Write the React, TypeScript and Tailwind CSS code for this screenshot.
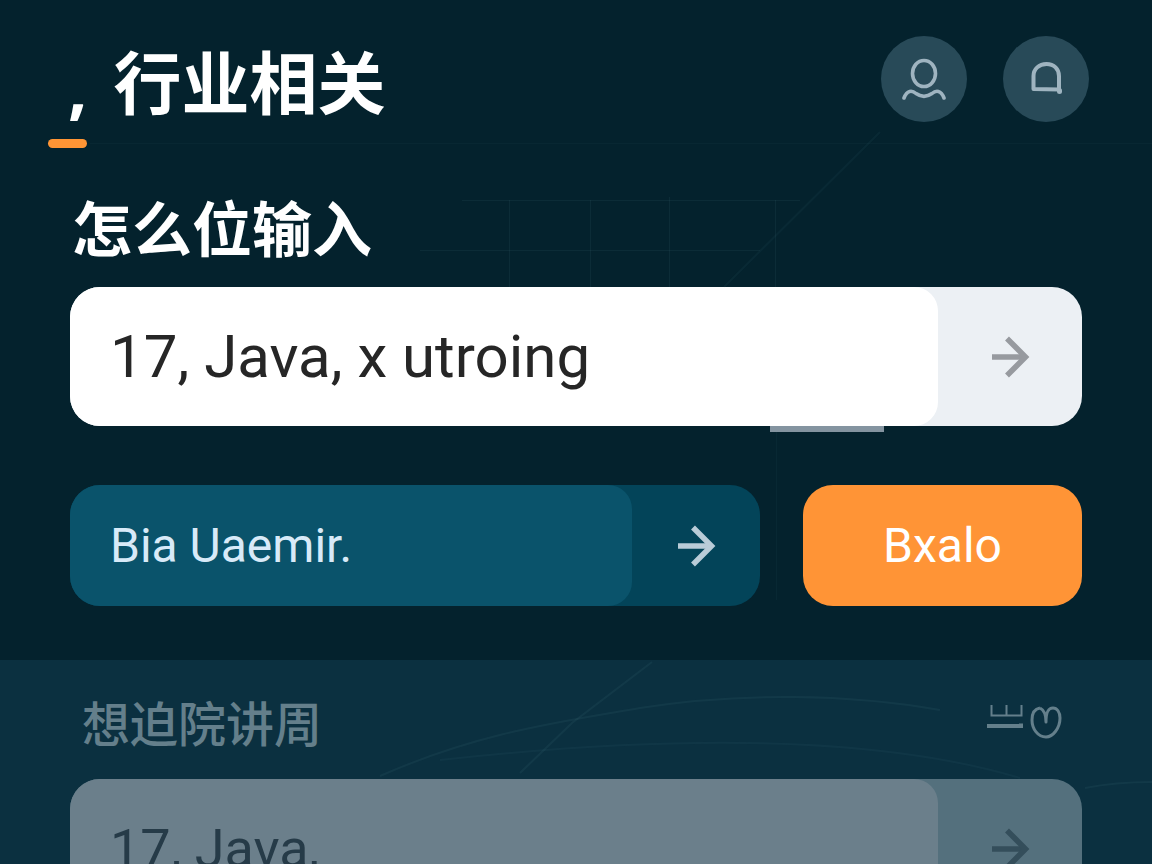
import type { ReactNode } from "react";

function ArrowIcon({ className }: { className?: string }) {
  return (
    <svg viewBox="0 0 40 44" className={className} fill="none" stroke="currentColor" strokeWidth="5.5">
      <path d="M2 22H35" />
      <path d="M17 3.5L35.500 22L17 40.500" />
    </svg>
  );
}

function RoundButton({ label, children }: { label: string; children: ReactNode }) {
  return (
    <button
      type="button"
      aria-label={label}
      className="flex size-[86px] items-center justify-center rounded-full bg-[#284a58] text-[#9fb4c0]"
    >
      {children}
    </button>
  );
}

function BackgroundLines() {
  return (
    <svg
      aria-hidden="true"
      viewBox="0 0 1152 864"
      preserveAspectRatio="xMidYMin slice"
      className="pointer-events-none absolute inset-0 h-full w-full"
      fill="none"
      stroke="#5b8796"
      strokeOpacity="0.1"
    >
      <path d="M90 143.500H1152" strokeOpacity="0.05" />
      <path d="M462 200.500H800M420 250.500H760" />
      <path d="M509.500 200V287M590.500 200V287M669.500 197V287M775.500 200V287" />
      <path d="M724 287L880 132" strokeWidth="2" strokeOpacity="0.07" />
      <path d="M776.500 432V600" strokeOpacity="0.06" />
      <path d="M520 773L572 723L652 662" strokeWidth="2" />
      <path d="M380 776C480 732 560 722 640 708C740 692 850 694 940 710" strokeWidth="2" />
      <path d="M440 760C640 738 860 730 1020 778" strokeWidth="2" strokeOpacity="0.07" />
      <path d="M1085 788Q1115 782 1152 782" strokeWidth="2" />
    </svg>
  );
}

export default function App() {
  return (
    <div
      lang="zh-CN"
      className="relative flex h-screen flex-col overflow-hidden bg-[#04222d] font-[Roboto,'Noto_Sans_CJK_SC',sans-serif]"
    >
      {/* Upper panel */}
      <main className="shrink-0 pb-[54px]">
        <header className="flex items-start justify-between pt-9 pr-[63px] pl-12">
          <div>
            <h1 className="flex h-[103px] gap-[26px] pl-5 text-[68px] leading-[100px] font-bold text-white">
              <span className="font-['Noto_Sans']">,</span>
              <span>行业相关</span>
            </h1>
            <div className="h-[9px] w-[39px] rounded-full bg-[#ff9535]" />
          </div>
          <div className="flex gap-9">
            <RoundButton label="用户">
              <svg viewBox="0 0 48 44" className="h-11 w-12" fill="none" stroke="currentColor" strokeWidth="3.600" strokeLinecap="round">
                <ellipse cx="24" cy="16.500" rx="11.500" ry="13" />
                <path d="M4 41C7 33 12 33 16 36.500C21 40 27 40 32 36.500C36 33 41 33 44 41" />
              </svg>
            </RoundButton>
            <RoundButton label="消息">
              <svg viewBox="0 0 36 36" className="size-9" fill="none" stroke="currentColor" strokeWidth="4" strokeLinejoin="round" strokeLinecap="round">
                <path d="M5.500 28V15C5.500 8 11 3 18.500 3C26 3 31 8 31 15V28.500Z" />
                <path d="M31.500 29.500V30.500" strokeWidth="5" />
              </svg>
            </RoundButton>
          </div>
        </header>

        <form className="px-[70px] pt-10" onSubmit={(e) => e.preventDefault()}>
          <label htmlFor="query" className="block h-[99px] pl-0.5 text-[60px] leading-[88px] font-bold text-white">
            怎么位输入
          </label>
          <div className="relative">
            <div className="flex h-[139px] overflow-hidden rounded-[30px] bg-[#ecf0f4]">
              <input
                id="query"
                defaultValue="17, Java, x utroing"
                className="min-w-0 flex-1 rounded-r-3xl bg-white pl-10 text-[60px] text-[#262626] outline-none"
              />
              <button type="submit" aria-label="搜索" className="flex w-36 items-center justify-center text-[#979a9f]">
                <ArrowIcon className="h-11 w-10" />
              </button>
            </div>
            <div className="absolute top-full right-[198px] h-1.5 w-[114px] bg-[#8494a0]" />
          </div>

          <div className="mt-[59px] flex gap-[43px]">
            <div className="flex h-[121px] min-w-0 flex-1 overflow-hidden rounded-[30px] bg-[#034459]">
              <input
                aria-label="Bia Uaemir."
                defaultValue="Bia Uaemir."
                className="min-w-0 flex-1 rounded-r-3xl bg-[#0a536b] pl-10 text-[48px] text-[#d8eaf8] outline-none"
              />
              <button type="button" aria-label="下一步" className="flex w-32 items-center justify-center text-[#b9ccd8]">
                <ArrowIcon className="h-11 w-10" />
              </button>
            </div>
            <button type="submit" className="w-[279px] rounded-[30px] bg-[#ff9436] text-[48px] text-white">
              Bxalo
            </button>
          </div>
        </form>
      </main>

      {/* Lower panel, dimmed */}
      <section className="min-h-0 flex-1 bg-[#0b3040] px-[70px] pt-7">
        <div className="flex h-[91px] items-start justify-between pr-5 pl-3 text-[#647f8b]">
          <label htmlFor="next" className="text-[48px] leading-[76px] font-medium">
            想迫院讲周
          </label>
          <svg viewBox="0 0 76 40" className="mt-4 h-10 w-19" fill="none" stroke="currentColor">
            <path d="M5.500 1V11.500H35.500V1M20.500 1V11.500" strokeWidth="2" />
            <path d="M1 22H37" strokeWidth="4" />
            <path d="M35 19.500V24" strokeWidth="4" />
            <path d="M54 4C48 5 46 10 46 16C46 25 52 33 60 33C67 33 74 24 74 14C74 8 71 4 67 4C62 4 60 8 60 18C60 10 58 6 54 4" strokeWidth="3" strokeLinejoin="round" />
          </svg>
        </div>
        <div className="flex h-[139px] overflow-hidden rounded-[30px] bg-[#54707d]">
          <input
            id="next"
            defaultValue="17, Java,"
            className="min-w-0 flex-1 rounded-r-3xl bg-[#6b7f8b] pl-10 text-[54px] text-[#263b48] outline-none"
          />
          <button type="button" aria-label="搜索" className="flex w-36 items-center justify-center text-[#344e5b]">
            <ArrowIcon className="h-11 w-10" />
          </button>
        </div>
      </section>
      <BackgroundLines />
    </div>
  );
}
